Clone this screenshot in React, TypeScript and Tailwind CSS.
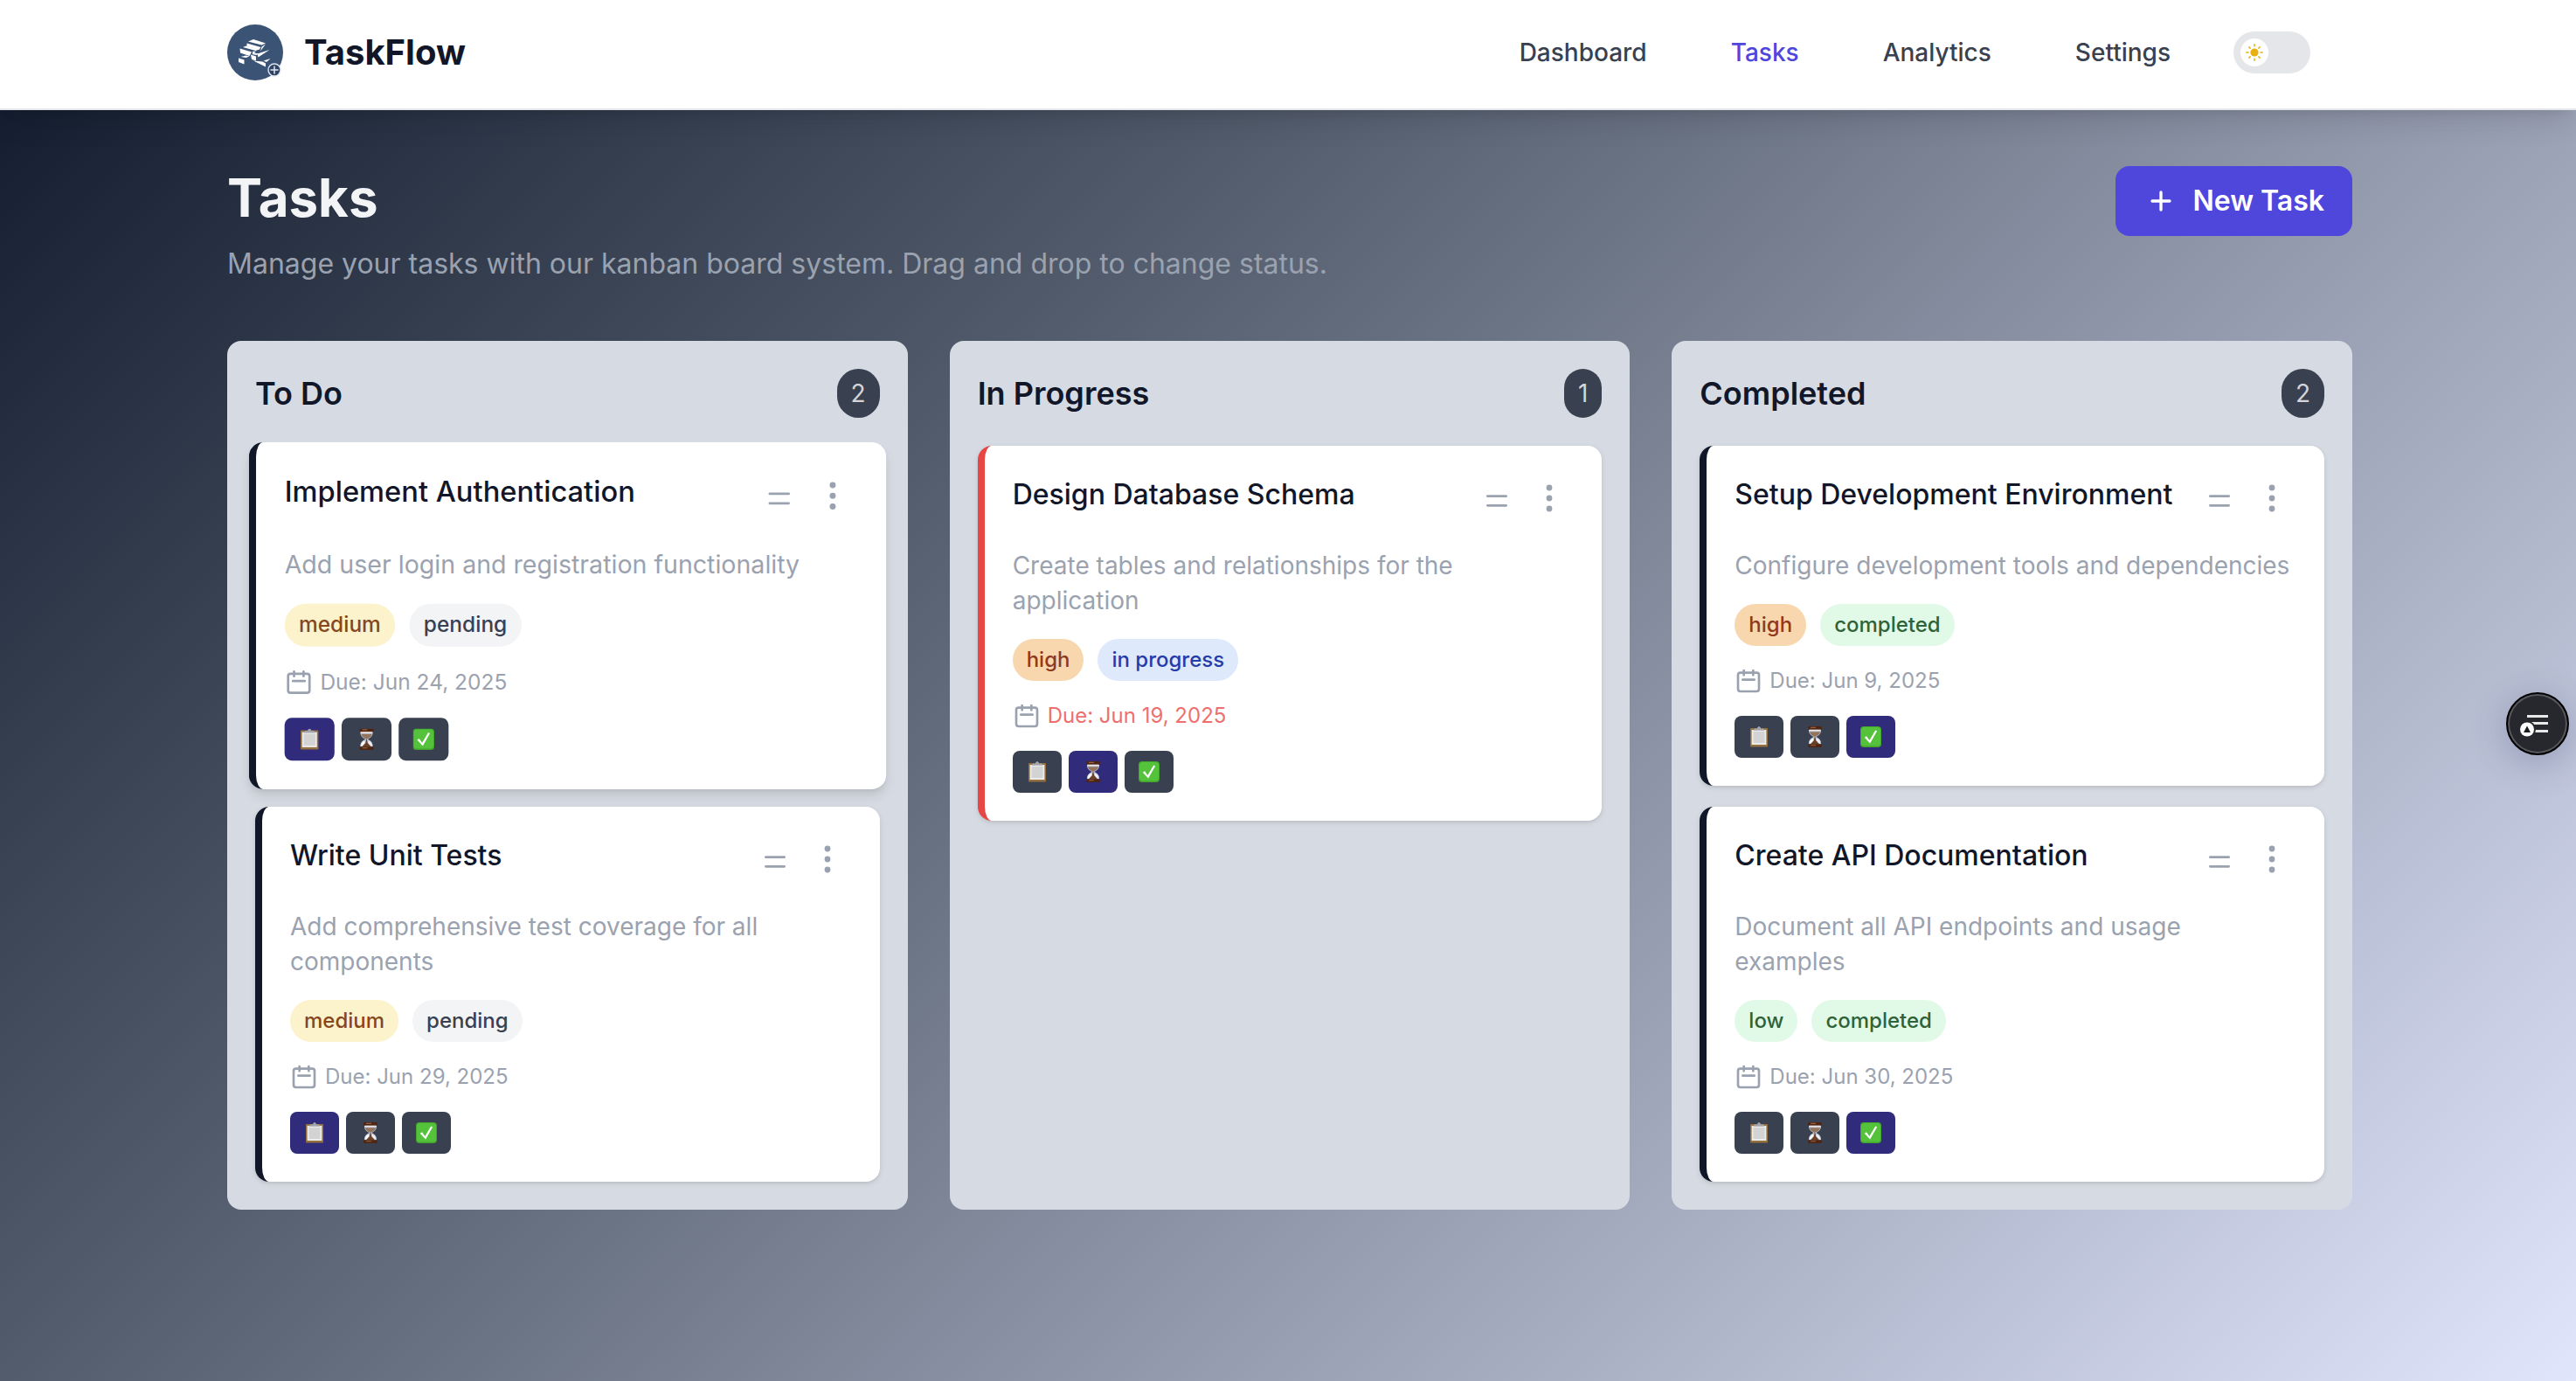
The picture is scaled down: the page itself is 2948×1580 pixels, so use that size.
import React, { useState } from "react";

type Status = "pending" | "in progress" | "completed";
type Priority = "low" | "medium" | "high";

interface Task {
  title: string;
  description: string;
  priority: Priority;
  status: Status;
  due: string;
  overdue?: boolean;
  raised?: boolean;
}

const columns: { title: string; tasks: Task[] }[] = [
  {
    title: "To Do",
    tasks: [
      {
        title: "Implement Authentication",
        description: "Add user login and registration functionality",
        priority: "medium",
        status: "pending",
        due: "Jun 24, 2025",
        raised: true,
      },
      {
        title: "Write Unit Tests",
        description: "Add comprehensive test coverage for all components",
        priority: "medium",
        status: "pending",
        due: "Jun 29, 2025",
      },
    ],
  },
  {
    title: "In Progress",
    tasks: [
      {
        title: "Design Database Schema",
        description: "Create tables and relationships for the application",
        priority: "high",
        status: "in progress",
        due: "Jun 19, 2025",
        overdue: true,
      },
    ],
  },
  {
    title: "Completed",
    tasks: [
      {
        title: "Setup Development Environment",
        description: "Configure development tools and dependencies",
        priority: "high",
        status: "completed",
        due: "Jun 9, 2025",
      },
      {
        title: "Create API Documentation",
        description: "Document all API endpoints and usage examples",
        priority: "low",
        status: "completed",
        due: "Jun 30, 2025",
      },
    ],
  },
];

const priorityStyle: Record<Priority, string> = {
  low: "bg-[#e1fae7] text-[#2f6239]",
  medium: "bg-[#fcf2cb] text-[#86471e]",
  high: "bg-[#f8d7af] text-[#8f3a1d]",
};

const statusStyle: Record<Status, string> = {
  pending: "bg-[#f3f4f6] text-[#384151]",
  "in progress": "bg-[#dee9fc] text-[#263ca8]",
  completed: "bg-[#e1fae7] text-[#2f6239]",
};

function LogoMark() {
  return (
    <svg viewBox="0 0 64 64" className="size-16" aria-hidden="true">
      <circle cx="32" cy="32" r="32" fill="#3b5375" />
      <g fill="#fff">
        <path d="M24 19.500l6-2.500 14 4.500-4.500 2z" />
        <path d="M22.500 21.500l16 4.500-2 3-14-4z" />
        <path d="M39.500 25.500l4.500-3-6 8z" />
        <path d="M18 26l3.500-1.500 15 4-4 1.500z" />
        <path d="M14.500 27.500l13.500 4-2.500 4.500-10.500-3.500z" />
        <path d="M29 31l4-.5-4 4z" />
        <path d="M27 34.500l6 2v5l-5-1.500z" />
        <path d="M31 32.500l5 1-2.500 1.500-5-1z" />
        <path d="M34.500 33.500l14-4.500-13 8.500z" />
        <path d="M15.500 37l6-1.500 4 1-4 1.500z" />
        <path d="M13 38.500l6.500 2v5L13 43z" />
        <path d="M30 41.500l10.500 1 3.500 2v4z" />
        <path d="M41.500 41.500l8-2.500-4.500 4z" />
      </g>
      <circle cx="54" cy="52" r="7" fill="#2f4364" stroke="#dfe6f1" strokeWidth="1.400" />
      <path d="M54 48v8M50 52h8" stroke="#dfe6f1" strokeWidth="1.500" strokeLinecap="round" />
    </svg>
  );
}

function SunIcon() {
  return (
    <svg viewBox="0 0 20 20" className="size-5" aria-hidden="true">
      <circle cx="10" cy="10" r="4.600" fill="#e8b010" />
      <path
        d="M10 .8v2.200M10 17v2.200M.8 10h2.200M17 10h2.200M3.900 3.900l1.200 1.200M14.900 14.900l1.200 1.200M3.900 16.100l1.200-1.200M14.900 5.100l1.200-1.200"
        stroke="#e8b010"
        strokeWidth="1.500"
        strokeLinecap="round"
      />
    </svg>
  );
}

function CalendarIcon() {
  return (
    <svg
      viewBox="0 0 24 24"
      className="size-8 text-[#9ba2af]"
      fill="none"
      stroke="currentColor"
      strokeWidth="2"
      strokeLinecap="round"
      strokeLinejoin="round"
      aria-hidden="true"
    >
      <path d="M8 7V3m8 4V3M7 11h10M5 21h14a2 2 0 002-2V7a2 2 0 00-2-2H5a2 2 0 00-2 2v12a2 2 0 002 2z" />
    </svg>
  );
}

function ClipboardEmoji() {
  return (
    <svg viewBox="0 0 24 24" className="size-6" aria-hidden="true">
      <rect x="2" y="2" width="20" height="21.500" rx="1" fill="#94713f" />
      <rect x="3.600" y="4" width="16.800" height="17" fill="#ececec" />
      <rect x="5.500" y="6" width="13" height="13" fill="#d3d3d3" />
      <path d="M5.500 4.800l1.500-2.300h3a2 2 0 014 0h3l1.500 2.300z" fill="#a2a5ad" />
      <circle cx="12" cy="1.500" r="1" fill="none" stroke="#a2a5ad" strokeWidth=".8" />
    </svg>
  );
}

function HourglassEmoji() {
  return (
    <svg viewBox="0 0 24 24" className="size-6" aria-hidden="true">
      <path
        d="M5 3.500h14c.3 4.500-2 6.700-5.600 8.500 3.600 1.800 5.900 4 5.600 8.500H5c-.3-4.500 2-6.700 5.600-8.500C7 10.200 4.700 8 5 3.500z"
        fill="#c3cbdc"
      />
      <path d="M5.800 6.200h12.400c-.7 3-3 4.300-5.700 5.600h-1c-2.700-1.300-5-2.600-5.700-5.600z" fill="#94745c" />
      <path d="M11.600 12h.8l.8 4.200 4 4.300H6.800l4-4.300z" fill="#6e4025" />
      <path d="M6 18.500c.3-2.400 1.500-3.700 3.800-4.800l.4 2.300-3.700 4z" fill="#fff" />
      <path d="M18 18.500c-.3-2.400-1.500-3.700-3.800-4.800l-.4 2.300 3.700 4z" fill="#eef1f7" />
      <rect x="4" y="0" width="16" height="3.800" rx="1.400" fill="#4f2613" />
      <rect x="5.500" y="3.700" width="13" height="1.300" rx=".6" fill="#efe4da" />
      <rect x="4" y="20.200" width="16" height="3.800" rx="1.400" fill="#4f2613" />
      <rect x="7" y=".8" width="6" height="1.100" rx=".5" fill="#96603f" />
      <rect x="7" y="21.200" width="6" height="1.100" rx=".5" fill="#96603f" />
    </svg>
  );
}

function CheckEmoji() {
  return (
    <svg viewBox="0 0 24 24" className="size-6" aria-hidden="true">
      <rect width="24" height="24" rx="4" fill="#43a52d" />
      <rect x="1" y="1" width="22" height="21.500" rx="3.500" fill="#55c23b" />
      <path d="M4.800 12.800l2.200-1.500 3.400 4.700L17.200 4.500l1.900.9-8 14.200z" fill="#fff" />
    </svg>
  );
}

const moves: { status: Status; label: string; Icon: () => React.JSX.Element }[] = [
  { status: "pending", label: "Move to To Do", Icon: ClipboardEmoji },
  { status: "in progress", label: "Move to In Progress", Icon: HourglassEmoji },
  { status: "completed", label: "Move to Completed", Icon: CheckEmoji },
];

function TaskCard({ task }: { task: Task }) {
  const border = task.overdue ? "border-[#e84545]" : "border-[#0f1728]";
  const lift = task.raised
    ? "scale-[1.02] shadow-[0_8px_12px_-2px_rgba(0,0,0,0.1),0_4px_8px_-4px_rgba(0,0,0,0.1)]"
    : "shadow-[0_2px_6px_0_rgba(0,0,0,0.1),0_2px_4px_-2px_rgba(0,0,0,0.1)]";
  return (
    <article className={`rounded-2xl border-l-8 bg-white p-8 ${border} ${lift}`}>
      <div className="flex h-[61px] items-start justify-between">
        <h3 className="text-[32px] leading-[48px] font-medium text-[#111628]">{task.title}</h3>
        <div className="flex items-start gap-4 text-[#9ba2af]">
          <svg
            viewBox="0 0 24 24"
            className="mt-[15px] size-8"
            fill="none"
            stroke="currentColor"
            strokeWidth="2"
            strokeLinecap="round"
            aria-hidden="true"
          >
            <path d="M4 8h16M4 16h16" />
          </svg>
          <button type="button" aria-label="Task options" className="p-2">
            <svg viewBox="0 0 20 20" className="size-10" fill="currentColor" aria-hidden="true">
              <circle cx="10" cy="4" r="1.700" />
              <circle cx="10" cy="10" r="1.700" />
              <circle cx="10" cy="16" r="1.700" />
            </svg>
          </button>
        </div>
      </div>
      <p className="mt-6 text-[28px] leading-10 text-[#9ba2af]">{task.description}</p>
      <div className="mt-6 flex gap-4 text-2xl font-medium">
        <span className={`rounded-full px-4 py-2 ${priorityStyle[task.priority]}`}>{task.priority}</span>
        <span className={`rounded-full px-4 py-2 ${statusStyle[task.status]}`}>{task.status}</span>
      </div>
      <div className="mt-6 flex items-center gap-2 text-2xl">
        <CalendarIcon />
        <span className={task.overdue ? "text-[#ed706e]" : "text-[#9ba2af]"}>Due: {task.due}</span>
      </div>
      <div className="mt-6 flex gap-2">
        {moves.map(({ status, label, Icon }) => (
          <button
            key={status}
            type="button"
            aria-label={label}
            className={`flex h-12 w-14 items-center justify-center rounded-lg ${
              status === task.status ? "bg-[#312b7c]" : "bg-[#394150]"
            }`}
          >
            <Icon />
          </button>
        ))}
      </div>
    </article>
  );
}

export default function App() {
  const [dark, setDark] = useState(false);
  return (
    <div className="flex min-h-screen flex-col bg-[linear-gradient(135deg,#0f192b_0%,#525c6c_35%,#979eb1_66%,#e0e5fc_100%)] font-['Inter',sans-serif]">
      <header className="border-b-2 border-[#e5e7eb] bg-white pb-1 pl-1 shadow-[0_20px_30px_-6px_rgba(0,0,0,0.1),0_8px_12px_-8px_rgba(0,0,0,0.1)]">
        <div className="mx-auto flex h-[120px] max-w-[2560px] items-center justify-between px-16">
          <a href="#" className="flex items-center gap-6">
            <LogoMark />
            <span className="text-[40px] leading-[56px] font-bold text-[#111628]">TaskFlow</span>
          </a>
          <div className="flex items-center gap-12 pr-12">
            <nav className="flex items-center gap-12 text-[28px] leading-10 font-medium text-[#394150]">
              <a href="#dashboard" className="px-6">Dashboard</a>
              <a href="#tasks" className="px-6 text-[#4f46dc]" aria-current="page">Tasks</a>
              <a href="#analytics" className="px-6">Analytics</a>
              <a href="#settings" className="px-6">Settings</a>
            </nav>
            <button
              type="button"
              role="switch"
              aria-checked={dark}
              aria-label="Toggle dark mode"
              onClick={() => setDark(!dark)}
              className={`flex h-12 w-[88px] items-center rounded-full bg-[#e5e6ea] px-2 ${dark ? "justify-end" : "justify-start"}`}
            >
              <span className="flex size-8 items-center justify-center rounded-full bg-white">
                <SunIcon />
              </span>
            </button>
          </div>
        </div>
      </header>

      <main className="pl-1">
        <div className="mx-auto max-w-[2560px] px-16 py-16">
          <div className="mb-16 flex items-start justify-between">
            <div>
              <h1 className="text-[60px] leading-[72px] font-bold text-[#f3f4f6]">Tasks</h1>
              <p className="mt-4 text-[32px] leading-[48px] text-[#9ba2af]">
                Manage your tasks with our kanban board system. Drag and drop to change status.
              </p>
            </div>
            <button
              type="button"
              className="flex h-20 items-center gap-4 rounded-2xl bg-[#4f46dc] px-8 text-[32px] leading-[48px] font-semibold text-white"
            >
              <svg
                viewBox="0 0 24 24"
                className="size-10"
                fill="none"
                stroke="currentColor"
                strokeWidth="2"
                strokeLinecap="round"
                aria-hidden="true"
              >
                <path d="M12 6v12M6 12h12" />
              </svg>
              New Task
            </button>
          </div>

          <div className="grid grid-cols-3 gap-12">
            {columns.map((column) => (
              <section key={column.title} className="rounded-2xl bg-[#d6dae2] p-8">
                <div className="mb-8 flex items-center justify-between">
                  <h2 className="text-4xl leading-[56px] font-semibold text-[#111628]">{column.title}</h2>
                  <span className="rounded-full bg-[#394150] px-4 py-2 text-[28px] leading-10 text-[#d3d5da]">
                    {column.tasks.length}
                  </span>
                </div>
                <div className="flex flex-col gap-6">
                  {column.tasks.map((task) => (
                    <TaskCard key={task.title} task={task} />
                  ))}
                </div>
              </section>
            ))}
          </div>
        </div>
      </main>

      <button
        type="button"
        aria-label="Open reading list"
        className="fixed top-[792px] right-2 size-[72px] rounded-full border-2 border-black bg-[#26282d] shadow-[inset_0_0_0_2px_#58595d,0_8px_40px_rgba(60,65,110,0.3)]"
      >
        <svg viewBox="0 0 68 68" className="size-full" aria-hidden="true">
          <g fill="#e8e8e8">
            <rect x="22" y="24" width="24" height="3" />
            <rect x="22" y="32" width="24" height="3" />
            <rect x="22" y="41" width="24" height="3" />
          </g>
          <circle cx="22" cy="40.500" r="10" fill="#26282d" />
          <circle cx="22" cy="40.500" r="8" fill="#fff" />
          <path d="M22 36.500l4 7.500h-8z" fill="#1b1c20" />
        </svg>
      </button>
    </div>
  );
}
